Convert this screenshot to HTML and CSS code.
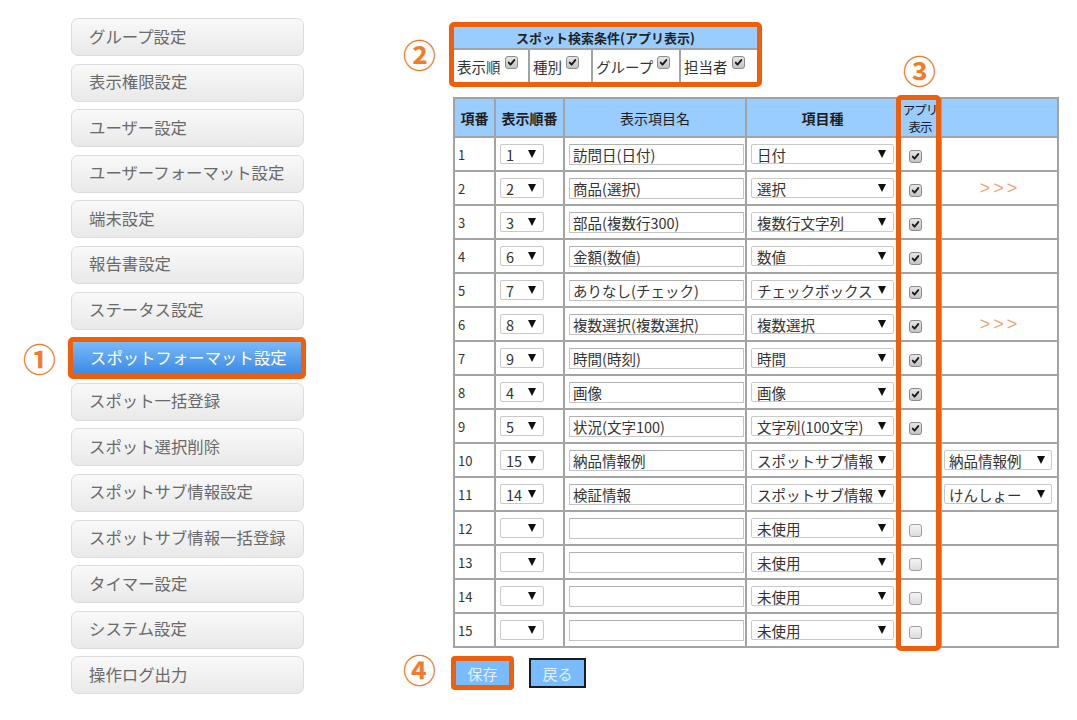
FILE: index.html
```html
<!DOCTYPE html>
<html lang="ja">
<head>
<meta charset="utf-8">
<title>スポットフォーマット設定</title>
<link rel="stylesheet" href="styles.css">
</head>
<body>
<div class="page">
  <nav class="menu">
    <a class="menu-item">グループ設定</a>
    <a class="menu-item">表示権限設定</a>
    <a class="menu-item">ユーザー設定</a>
    <a class="menu-item">ユーザーフォーマット設定</a>
    <a class="menu-item">端末設定</a>
    <a class="menu-item">報告書設定</a>
    <a class="menu-item">ステータス設定</a>
    <a class="menu-item active"><span class="mark mark-1">①</span>スポットフォーマット設定</a>
    <a class="menu-item">スポット一括登録</a>
    <a class="menu-item">スポット選択削除</a>
    <a class="menu-item">スポットサブ情報設定</a>
    <a class="menu-item">スポットサブ情報一括登録</a>
    <a class="menu-item">タイマー設定</a>
    <a class="menu-item">システム設定</a>
    <a class="menu-item">操作ログ出力</a>
  </nav>

  <main class="main">
    <div class="anno">②</div>
    <div class="search-box">
      <table class="search">
        <colgroup><col class="sc1"><col class="sc2"><col class="sc3"><col class="sc4"></colgroup>
        <tr><th colspan="4">スポット検索条件(アプリ表示)</th></tr>
        <tr>
          <td>表示順<span class="cb on"><svg viewBox="0 0 13 13"><path d="M3.2 6.6 L5.4 9 L9.8 3.6"/></svg></span></td>
          <td>種別<span class="cb on"><svg viewBox="0 0 13 13"><path d="M3.2 6.6 L5.4 9 L9.8 3.6"/></svg></span></td>
          <td>グループ<span class="cb on"><svg viewBox="0 0 13 13"><path d="M3.2 6.6 L5.4 9 L9.8 3.6"/></svg></span></td>
          <td>担当者<span class="cb on"><svg viewBox="0 0 13 13"><path d="M3.2 6.6 L5.4 9 L9.8 3.6"/></svg></span></td>
        </tr>
      </table>
    </div>

    <div></div>
    <div class="table-wrap">
      <span class="mark mark-3">③</span>
      <span class="col-hl"></span>
      <table class="grid">
        <colgroup><col class="g1"><col class="g2"><col class="g3"><col class="g4"><col class="g5"><col class="g6"></colgroup>
        <tr>
          <th class="b">項番</th><th class="b">表示順番</th><th>表示項目名</th><th class="b">項目種</th><th class="app"><span class="app-l">アプリ</span><span class="app-l">表示</span></th><th></th>
        </tr>
        <tr><td class="no">1</td><td><span class="sel s-ord"><span>1</span><i class="arr"></i></span></td><td><input class="txt" type="text" value="訪問日(日付)"></td><td><span class="sel s-type"><span>日付</span><i class="arr"></i></span></td><td class="ck"><span class="cb on"><svg viewBox="0 0 13 13"><path d="M3.2 6.6 L5.4 9 L9.8 3.6"/></svg></span></td><td></td></tr>
        <tr><td class="no">2</td><td><span class="sel s-ord"><span>2</span><i class="arr"></i></span></td><td><input class="txt" type="text" value="商品(選択)"></td><td><span class="sel s-type"><span>選択</span><i class="arr"></i></span></td><td class="ck"><span class="cb on"><svg viewBox="0 0 13 13"><path d="M3.2 6.6 L5.4 9 L9.8 3.6"/></svg></span></td><td class="more">&gt;&gt;&gt;</td></tr>
        <tr><td class="no">3</td><td><span class="sel s-ord"><span>3</span><i class="arr"></i></span></td><td><input class="txt" type="text" value="部品(複数行300)"></td><td><span class="sel s-type"><span>複数行文字列</span><i class="arr"></i></span></td><td class="ck"><span class="cb on"><svg viewBox="0 0 13 13"><path d="M3.2 6.6 L5.4 9 L9.8 3.6"/></svg></span></td><td></td></tr>
        <tr><td class="no">4</td><td><span class="sel s-ord"><span>6</span><i class="arr"></i></span></td><td><input class="txt" type="text" value="金額(数値)"></td><td><span class="sel s-type"><span>数値</span><i class="arr"></i></span></td><td class="ck"><span class="cb on"><svg viewBox="0 0 13 13"><path d="M3.2 6.6 L5.4 9 L9.8 3.6"/></svg></span></td><td></td></tr>
        <tr><td class="no">5</td><td><span class="sel s-ord"><span>7</span><i class="arr"></i></span></td><td><input class="txt" type="text" value="ありなし(チェック)"></td><td><span class="sel s-type"><span>チェックボックス</span><i class="arr"></i></span></td><td class="ck"><span class="cb on"><svg viewBox="0 0 13 13"><path d="M3.2 6.6 L5.4 9 L9.8 3.6"/></svg></span></td><td></td></tr>
        <tr><td class="no">6</td><td><span class="sel s-ord"><span>8</span><i class="arr"></i></span></td><td><input class="txt" type="text" value="複数選択(複数選択)"></td><td><span class="sel s-type"><span>複数選択</span><i class="arr"></i></span></td><td class="ck"><span class="cb on"><svg viewBox="0 0 13 13"><path d="M3.2 6.6 L5.4 9 L9.8 3.6"/></svg></span></td><td class="more">&gt;&gt;&gt;</td></tr>
        <tr><td class="no">7</td><td><span class="sel s-ord"><span>9</span><i class="arr"></i></span></td><td><input class="txt" type="text" value="時間(時刻)"></td><td><span class="sel s-type"><span>時間</span><i class="arr"></i></span></td><td class="ck"><span class="cb on"><svg viewBox="0 0 13 13"><path d="M3.2 6.6 L5.4 9 L9.8 3.6"/></svg></span></td><td></td></tr>
        <tr><td class="no">8</td><td><span class="sel s-ord"><span>4</span><i class="arr"></i></span></td><td><input class="txt" type="text" value="画像"></td><td><span class="sel s-type"><span>画像</span><i class="arr"></i></span></td><td class="ck"><span class="cb on"><svg viewBox="0 0 13 13"><path d="M3.2 6.6 L5.4 9 L9.8 3.6"/></svg></span></td><td></td></tr>
        <tr><td class="no">9</td><td><span class="sel s-ord"><span>5</span><i class="arr"></i></span></td><td><input class="txt" type="text" value="状況(文字100)"></td><td><span class="sel s-type"><span>文字列(100文字)</span><i class="arr"></i></span></td><td class="ck"><span class="cb on"><svg viewBox="0 0 13 13"><path d="M3.2 6.6 L5.4 9 L9.8 3.6"/></svg></span></td><td></td></tr>
        <tr><td class="no">10</td><td><span class="sel s-ord"><span>15</span><i class="arr"></i></span></td><td><input class="txt" type="text" value="納品情報例"></td><td><span class="sel s-type"><span>スポットサブ情報</span><i class="arr"></i></span></td><td class="ck"></td><td><span class="sel s-sub"><span>納品情報例</span><i class="arr"></i></span></td></tr>
        <tr><td class="no">11</td><td><span class="sel s-ord"><span>14</span><i class="arr"></i></span></td><td><input class="txt" type="text" value="検証情報"></td><td><span class="sel s-type"><span>スポットサブ情報</span><i class="arr"></i></span></td><td class="ck"></td><td><span class="sel s-sub"><span>けんしょー</span><i class="arr"></i></span></td></tr>
        <tr><td class="no">12</td><td><span class="sel s-ord"><span></span><i class="arr"></i></span></td><td><input class="txt" type="text" value=""></td><td><span class="sel s-type"><span>未使用</span><i class="arr"></i></span></td><td class="ck"><span class="cb"></span></td><td></td></tr>
        <tr><td class="no">13</td><td><span class="sel s-ord"><span></span><i class="arr"></i></span></td><td><input class="txt" type="text" value=""></td><td><span class="sel s-type"><span>未使用</span><i class="arr"></i></span></td><td class="ck"><span class="cb"></span></td><td></td></tr>
        <tr><td class="no">14</td><td><span class="sel s-ord"><span></span><i class="arr"></i></span></td><td><input class="txt" type="text" value=""></td><td><span class="sel s-type"><span>未使用</span><i class="arr"></i></span></td><td class="ck"><span class="cb"></span></td><td></td></tr>
        <tr><td class="no">15</td><td><span class="sel s-ord"><span></span><i class="arr"></i></span></td><td><input class="txt" type="text" value=""></td><td><span class="sel s-type"><span>未使用</span><i class="arr"></i></span></td><td class="ck"><span class="cb"></span></td><td></td></tr>
      </table>
    </div>

    <div class="anno">④</div>
    <div class="actions">
      <button class="btn btn-save" type="button">保存</button>
      <button class="btn btn-back" type="button">戻る</button>
    </div>
  </main>
</div>
</body>
</html>
```

FILE: styles.css
```css
body {
  margin: 0;
  background: #ffffff;
  color: #333333;
  font-family: "Noto Sans CJK JP", "Noto Sans", sans-serif;
}

.page {
  display: flex;
  align-items: flex-start;
}

/* ---------- left menu ---------- */
.menu {
  display: flex;
  flex-direction: column;
  gap: 7.6px;
  width: 233px;
  margin: 18px 0 0 71px;
}

.menu-item {
  position: relative;
  display: flex;
  align-items: center;
  box-sizing: border-box;
  height: 38px;
  padding: 0 0 3px 17px;
  border: 1px solid #dcdcdc;
  border-radius: 7px;
  background: linear-gradient(#f9f9f9, #e9e9e9);
  color: #6a6a6a;
  font-size: 16.4px;
  text-decoration: none;
  white-space: nowrap;
}

.menu-item.active {
  height: 42px;
  margin: 0 -2px -4px -3px;
  padding: 0 0 3px 17px;
  border: 5px solid #ef5f0a;
  border-radius: 5px;
  background: linear-gradient(#79b9f8, #3b8ae6);
  color: #ffffff;
}

.mark {
  position: absolute;
  color: #f17b2c;
  font-size: 33px;
  font-weight: bold;
  line-height: 1;
  font-family: "Noto Sans CJK JP", sans-serif;
}

.mark-1 {
  left: -50px;
  top: 50%;
  transform: translateY(-50%);
}

/* ---------- main area ---------- */
.main {
  display: grid;
  grid-template-columns: 44px auto;
  align-items: center;
  margin-left: 101px;
  padding-top: 22px;
}

.anno {
  color: #f17b2c;
  font-size: 33px;
  font-weight: bold;
  line-height: 1;
  margin-left: -2px;
}

/* search conditions box */
.search-box {
  box-sizing: border-box;
  width: 313px;
  height: 65px;
  border: 5px solid #ef5f0a;
  border-radius: 5px;
  overflow: hidden;
}

.search {
  border-collapse: collapse;
  width: 100%;
  table-layout: fixed;
}

.sc1 { width: 75px; }
.sc2 { width: 63px; }
.sc3 { width: 88px; }
.sc4 { width: 77px; }

.search th {
  height: 21px;
  padding: 0;
  background: #99ccff;
  border-bottom: 2px solid #a3a3a3;
  color: #222222;
  font-size: 13px;
  font-weight: bold;
}

.search td {
  height: 33px;
  padding: 0 0 0 3px;
  border-left: 2px solid #a3a3a3;
  color: #333333;
  font-size: 14.5px;
  white-space: nowrap;
}

.search td:first-child {
  border-left: none;
}

.search .cb {
  margin-left: 4px;
  vertical-align: 4px;
}

/* checkbox */
.cb {
  display: inline-block;
  box-sizing: border-box;
  width: 13px;
  height: 13px;
  border: 1px solid #a0a0a0;
  border-radius: 3px;
  background: linear-gradient(#f4f4f4, #dcdcdc);
  vertical-align: middle;
}

.cb.on {
  border-color: #8c8c8c;
  background: linear-gradient(#e6e6e6, #c4c4c4);
}

.cb svg {
  display: block;
  width: 11px;
  height: 11px;
}

.cb path {
  fill: none;
  stroke: #1a1a1a;
  stroke-width: 2.2;
  stroke-linecap: round;
  stroke-linejoin: round;
}

/* main table */
.table-wrap {
  position: relative;
  width: 604px;
  margin: 10px 0 0 4px;
}

.col-hl {
  position: absolute;
  left: 443px;
  top: -2px;
  box-sizing: border-box;
  width: 45px;
  height: 556px;
  border: 5px solid #ef5f0a;
  border-radius: 5px;
  pointer-events: none;
  z-index: 2;
}

.mark-3 {
  left: 450px;
  top: -43px;
}

.grid {
  border-collapse: collapse;
  table-layout: fixed;
  width: 604px;
  font-size: 14px;
}

.g1 { width: 41px; }
.g2 { width: 69px; }
.g3 { width: 182px; }
.g4 { width: 153px; }
.g5 { width: 42px; }
.g6 { width: 117px; }

.grid th,
.grid td {
  border: 2px solid #a3a3a3;
  padding: 0;
}

.grid th {
  height: 37px;
  background: #99ccff;
  color: #1e1e1e;
  font-size: 14px;
  font-weight: normal;
}

.grid th.b {
  font-weight: bold;
}

.grid th.app {
  font-size: 12.5px;
  line-height: 17px;
  letter-spacing: -1px;
}

.app-l {
  display: block;
}

.grid td {
  height: 32px;
}

.grid td.no {
  padding-left: 3px;
  font-size: 13px;
  color: #333333;
}

.grid td.ck {
  padding-left: 9px;
  text-align: left;
}

.grid td.more {
  text-align: center;
  color: #f6a06a;
  font-family: "Liberation Sans", sans-serif;
  font-size: 18px;
  letter-spacing: 3px;
  padding-left: 1px;
}

/* pseudo selects */
.sel {
  display: flex;
  align-items: center;
  justify-content: space-between;
  box-sizing: border-box;
  height: 20px;
  margin-left: 4px;
  border: 1px solid #c9c9c9;
  border-radius: 2px;
  background: #ffffff;
  color: #333333;
  font-size: 14.5px;
  white-space: nowrap;
}

.s-ord {
  width: 44px;
  padding: 0 7px 0 5px;
}

.s-type {
  width: 143px;
  padding: 0 7px 0 5px;
}

.s-sub {
  width: 108px;
  margin-left: 2px;
  padding: 0 6px 0 4px;
}

.arr {
  display: block;
  width: 0;
  height: 0;
  border-left: 4px solid transparent;
  border-right: 4px solid transparent;
  border-top: 8px solid #111111;
}

/* text inputs */
.txt {
  display: block;
  box-sizing: border-box;
  width: 175px;
  height: 21px;
  margin: 0 0 0 4px;
  padding: 0 3px;
  border: 1px solid #c4c4c4;
  border-top-color: #b0b0b0;
  border-radius: 1px;
  background: #ffffff;
  color: #333333;
  font-family: "Noto Sans CJK JP", sans-serif;
  font-size: 14.5px;
}

/* bottom buttons */
.actions {
  display: flex;
  align-items: center;
  margin-top: 8px;
  margin-left: 2px;
}

.btn {
  box-sizing: border-box;
  padding: 0;
  background: #78bcff;
  color: #e2f1ff;
  font-family: "Noto Sans CJK JP", sans-serif;
  font-size: 15px;
}

.btn-save {
  width: 63px;
  height: 34px;
  border: 5px solid #ef5f0a;
  border-radius: 4px;
}

.btn-back {
  width: 57px;
  height: 30px;
  margin-left: 15px;
  border: 2px solid #1c1c1c;
  border-radius: 0;
}
```
